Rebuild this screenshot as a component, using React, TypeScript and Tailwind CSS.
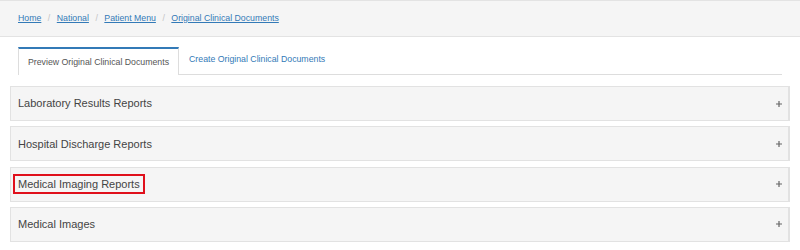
import * as React from "react";

const crumbs = ["Home", "National", "Patient Menu", "Original Clinical Documents"];

const panels = [
  "Laboratory Results Reports",
  "Hospital Discharge Reports",
  "Medical Imaging Reports",
  "Medical Images",
];

const Plus: React.FC = () => (
  <svg width="6" height="6" viewBox="0 0 6 6" className="shrink-0">
    <path d="M3 0v6M0 3h6" stroke="#666" strokeWidth="1.2" />
  </svg>
);

const App: React.FC = () => {
  return (
    <div
      className="w-[800px] h-[250px] bg-white overflow-hidden"
      style={{ fontFamily: '"Liberation Sans", Arial, sans-serif' }}
    >
      {/* breadcrumb */}
      <div className="h-[37px] bg-[#f5f5f5] border-t border-b border-[#e3e3e3] flex items-center px-[18px] text-[8.75px]">
        {crumbs.map((c, i) => (
          <React.Fragment key={c}>
            {i > 0 && <span className="text-[#c4c4c4] px-[6.5px]">/</span>}
            <a href="#" className="text-[#337ab7] underline">
              {c}
            </a>
          </React.Fragment>
        ))}
      </div>

      {/* tabs */}
      <div className="mt-[10px] mx-[18px] flex border-b border-[#dddddd] text-[8.75px]">
        <div className="h-[28px] -mb-px px-[9px] bg-white border-t-2 border-t-[#337ab7] border-x border-x-[#dddddd] flex items-center pt-[2px] text-[#555555]">
          Preview Original Clinical Documents
        </div>
        <div className="h-[27px] px-[10px] flex items-center pb-[2px] text-[#337ab7]">
          Create Original Clinical Documents
        </div>
      </div>

      {/* panels */}
      <div className="px-[10px] mt-[11px] flex flex-col gap-[5.3px]">
        {panels.map((p, i) => (
          <div
            key={p}
            className="h-[35px] bg-[#f5f5f5] border border-[#e2e2e2] border-r-2 flex items-center justify-between pl-[7px] pr-[6px] text-[11px] text-[#444444]"
          >
            {i === 2 ? (
              <span className="border-2 border-[#e0101c] h-[20px] w-[132px] -ml-[5px] pl-[3px] flex items-center">
                {p}
              </span>
            ) : (
              <span>{p}</span>
            )}
            <Plus />
          </div>
        ))}
      </div>
    </div>
  );
};

export default App;
